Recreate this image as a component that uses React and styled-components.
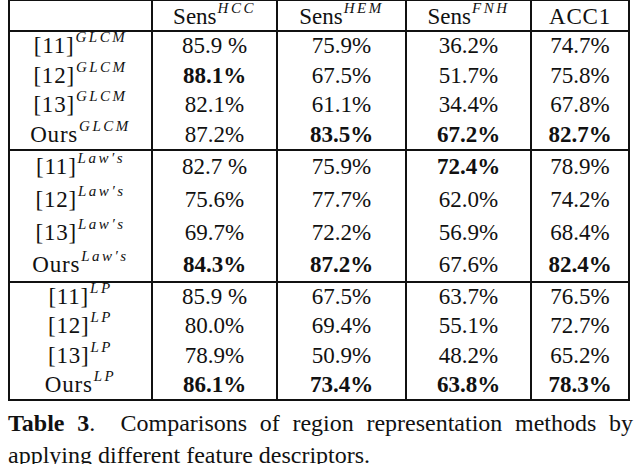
import React from "react";
import styled, { createGlobalStyle } from "styled-components";

const serif = `"Liberation Serif", "Times New Roman", serif`;

const Global = createGlobalStyle`
  html, body { margin: 0; padding: 0; background: #fff; }
  body { font-family: ${serif}; color: #111; }
`;

const Page = styled.div`
  width: 640px;
  height: 465px;
  overflow: hidden;
  padding: 0 0 0 8px;
  box-sizing: border-box;
  margin-top: -1px;
  font-family: ${serif};
`;

const Table = styled.table`
  border-collapse: collapse;
  width: 620px;
  table-layout: fixed;
  border: 2px solid #111;
  font-family: ${serif};
  font-size: 23px;
  line-height: 22px;
  color: #111;
`;

const Section = styled.tbody`
  border-top: 2px solid #111;
`;

const Row = styled.tr`
  height: ${(p) => p.$h}px;
`;

const Cell = styled.td`
  padding: 0;
  text-align: center;
  vertical-align: middle;
  border-left: 2px solid #111;
  font-family: ${serif};
  font-weight: ${(p) => (p.$bold ? 700 : 400)};
  white-space: nowrap;
`;

const Head = styled(Cell).attrs({ as: "th" })`
  font-weight: 400;
  padding-top: 3px;
`;

const Label = styled.span`
  letter-spacing: 0.8px;
`;

const Sup = styled.span`
  font-family: ${serif};
  font-style: italic;
  font-weight: 400;
  font-size: 15px;
  line-height: 0;
  letter-spacing: 2.5px;
  vertical-align: ${(p) => p.$raise || 11}px;
  margin-left: 1px;
`;

const Caption = styled.div`
  width: 625px;
  margin-top: 6px;
  font-family: ${serif};
  font-size: 24px;
  line-height: 32px;
  color: #111;
`;

const CapLine = styled.div`
  text-align: justify;
  text-align-last: ${(p) => (p.$full ? "justify" : "left")};
  white-space: nowrap;
`;

const Strong = styled.b`
  font-weight: 700;
`;

const sections = [
  {
    tag: "GLCM",
    h: 29.75,
    rows: [
      ["[11]", ["85.9 %", "75.9%", "36.2%", "74.7%"], []],
      ["[12]", ["88.1%", "67.5%", "51.7%", "75.8%"], [0]],
      ["[13]", ["82.1%", "61.1%", "34.4%", "67.8%"], []],
      ["Ours", ["87.2%", "83.5%", "67.2%", "82.7%"], [1, 2, 3]],
    ],
  },
  {
    tag: "Law′s",
    h: 33,
    rows: [
      ["[11]", ["82.7 %", "75.9%", "72.4%", "78.9%"], [2]],
      ["[12]", ["75.6%", "77.7%", "62.0%", "74.2%"], []],
      ["[13]", ["69.7%", "72.2%", "56.9%", "68.4%"], []],
      ["Ours", ["84.3%", "87.2%", "67.6%", "82.4%"], [0, 1, 3]],
    ],
  },
  {
    tag: "LP",
    h: 29.5,
    rows: [
      ["[11]", ["85.9 %", "67.5%", "63.7%", "76.5%"], []],
      ["[12]", ["80.0%", "69.4%", "55.1%", "72.7%"], []],
      ["[13]", ["78.9%", "50.9%", "48.2%", "65.2%"], []],
      ["Ours", ["86.1%", "73.4%", "63.8%", "78.3%"], [0, 1, 2, 3]],
    ],
  },
];

export default function App() {
  return (
    <>
      <Global />
      <Page>
        <Table>
          <colgroup>
            <col style={{ width: 143 }} />
            <col style={{ width: 125 }} />
            <col style={{ width: 129 }} />
            <col style={{ width: 125 }} />
            <col style={{ width: 98 }} />
          </colgroup>
          <thead>
            <Row $h={31}>
              <Head />
              <Head>
                Sens<Sup $raise={11}>HCC</Sup>
              </Head>
              <Head>
                Sens<Sup $raise={11}>HEM</Sup>
              </Head>
              <Head>
                Sens<Sup $raise={11}>FNH</Sup>
              </Head>
              <Head>
                <Label>ACC1</Label>
              </Head>
            </Row>
          </thead>
          {sections.map((s) => (
            <Section key={s.tag}>
              {s.rows.map(([label, vals, bold]) => (
                <Row key={label} $h={s.h}>
                  <Cell>
                    <Label>{label}</Label>
                    <Sup>{s.tag}</Sup>
                  </Cell>
                  {vals.map((v, i) => (
                    <Cell key={i} $bold={bold.includes(i)}>
                      {v}
                    </Cell>
                  ))}
                </Row>
              ))}
            </Section>
          ))}
        </Table>
        <Caption>
          <CapLine $full>
            <Strong>Table 3</Strong>.&nbsp; Comparisons of region representation methods by
          </CapLine>
          <CapLine>applying different feature descriptors.</CapLine>
        </Caption>
      </Page>
    </>
  );
}
